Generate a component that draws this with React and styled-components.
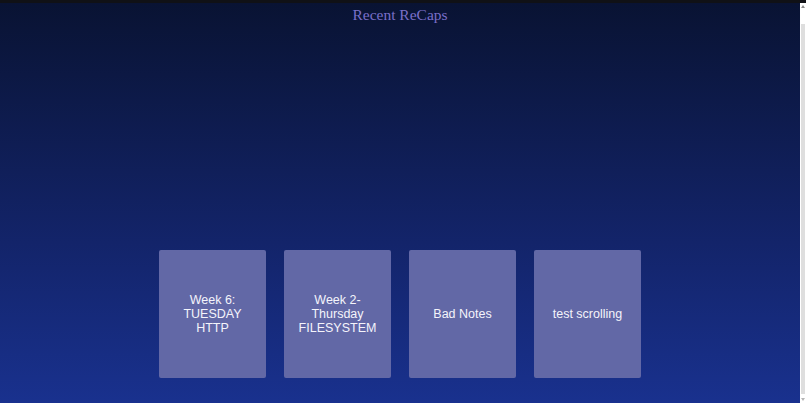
import React from "react";
import styled, { createGlobalStyle } from "styled-components";

const GlobalStyle = createGlobalStyle`
  html, body {
    margin: 0;
    padding: 0;
    height: 100%;
    overflow: hidden;
    background: #101116;
  }
`;

const Frame = styled.div`
  height: 403px;
  display: flex;
  border-top: 3px solid #101116;
  box-sizing: border-box;
`;

const Content = styled.div`
  flex: 1;
  display: flex;
  flex-direction: column;
  align-items: center;
  background: linear-gradient(to bottom, #091333 0%, #13246a 60%, #19318e 100%);
`;

const Scrollbar = styled.div`
  width: 6px;
  background: #ffffff;
  display: flex;
  flex-direction: column;
  align-items: center;
  padding: 2px 0;
  box-sizing: border-box;
`;

const Arrow = styled.div`
  width: 0;
  height: 0;
  border-left: 2px solid transparent;
  border-right: 2px solid transparent;
  ${({ $down }) =>
    $down
      ? "border-top: 3px solid #b5b5b5;"
      : "border-bottom: 3px solid #8a8a8a;"}
`;

const Thumb = styled.div`
  flex: 1;
  width: 4px;
  margin: 16px 0 4px;
  background: #dedede;
`;

const Title = styled.h1`
  margin: 3px 0 0;
  font-family: "Liberation Serif", "Times New Roman", serif;
  font-size: 15.5px;
  font-weight: 400;
  color: #7a6fc9;
`;

const Grid = styled.div`
  margin-top: 226px;
  display: flex;
  gap: 18px;
`;

const Card = styled.div`
  width: 107px;
  height: 128px;
  border-radius: 2px;
  background: #6268a6;
  display: flex;
  align-items: center;
  justify-content: center;
  text-align: center;
  padding: 0 8px;
  box-sizing: border-box;
  font-family: "Liberation Sans", Arial, sans-serif;
  font-size: 12.5px;
  line-height: 14px;
  color: #f4f4fb;
`;

const recaps = [
  ["Week 6:", "TUESDAY", "HTTP"],
  ["Week 2-", "Thursday", "FILESYSTEM"],
  ["Bad Notes"],
  ["test scrolling"],
];

export default function App() {
  return (
    <>
      <GlobalStyle />
      <Frame>
        <Content>
          <Title>Recent ReCaps</Title>
          <Grid>
            {recaps.map((lines, i) => (
              <Card key={i}>
                <div>
                  {lines.map((l, j) => (
                    <div key={j}>{l}</div>
                  ))}
                </div>
              </Card>
            ))}
          </Grid>
        </Content>
        <Scrollbar>
          <Arrow />
          <Thumb />
          <Arrow $down />
        </Scrollbar>
      </Frame>
    </>
  );
}
